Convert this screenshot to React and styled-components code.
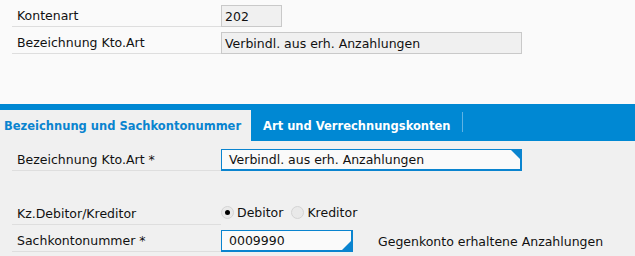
import React from 'react'
import styled, { createGlobalStyle } from 'styled-components'

const GlobalStyle = createGlobalStyle`
 html, body {
  margin: 0;
  padding: 0;
  background: #fafafa;
 }
 body {
  font-family: 'DejaVu Sans', Verdana, sans-serif;
  font-size: 12.5px;
  color: #111;
 }
`

const Page = styled.div`
 width: 635px;
 height: 256px;
 overflow: hidden;
 display: flex;
 flex-direction: column;
`

const Header = styled.section`
 height: 104px;
 padding: 5px 0 0 12px;
 box-sizing: border-box;
 display: flex;
 flex-direction: column;
 gap: 5px;
`

const Row = styled.div`
 display: grid;
 grid-template-columns: 209px auto;
 height: 22px;
 margin-top: ${(p) => p.$top || 0}px;
`

const Label = styled.div`
 border-bottom: 1px solid #dedede;
 padding-left: 5px;
 display: flex;
 align-items: center;
 white-space: nowrap;
`

const Field = styled.div`
 position: relative;
 width: ${(p) => p.$width}px;
 height: 22px;
 box-sizing: border-box;
 padding-left: ${(p) => (p.$edit ? 7 : 3)}px;
 display: flex;
 align-items: center;
 white-space: nowrap;
 background: ${(p) => (p.$edit ? '#fafafa' : '#f0f0f0')};
 border: 1px solid ${(p) => (p.$edit ? '#0a84cf' : '#c9c9c9')};
 ${(p) => (p.$edit ? 'border-width: 1px 2px 2px 1px;' : '')}
`

const Corner = styled.span`
 position: absolute;
 right: 0;
 ${(p) => (p.$bottom ? 'bottom: 0;' : 'top: 0;')}
 width: 0;
 height: 0;
 border-style: solid;
 border-width: ${(p) => (p.$bottom ? '0 0 9px 9px' : '0 9px 9px 0')};
 border-color: ${(p) =>
  p.$bottom
   ? 'transparent transparent #0a84cf transparent'
   : 'transparent #0a84cf transparent transparent'};
`

const TabBar = styled.nav`
 height: 37px;
 background: #0088d3;
 display: flex;
 align-items: flex-end;
`

const Tab = styled.div`
 height: 31px;
 box-sizing: border-box;
 padding: ${(p) => (p.$active ? '0 10px 0 4px' : '0 11px 0 12px')};
 display: flex;
 align-items: center;
 font-weight: bold;
 font-size: 11.5px;
 white-space: nowrap;
 background: ${(p) => (p.$active ? '#f0f0f0' : 'transparent')};
 color: ${(p) => (p.$active ? '#0a84cf' : '#fff')};
`

const TabDivider = styled.span`
 width: 1px;
 height: 20px;
 margin-bottom: 9px;
 background: #5fb3e4;
`

const Content = styled.section`
 flex: 1;
 background: #f0f0f0;
 padding: 8px 0 0 12px;
 display: flex;
 flex-direction: column;
`

const Radios = styled.div`
 display: flex;
 align-items: center;
 gap: 8px;
 padding-top: 1px;
 align-self: start;
 height: 16px;
`

const Radio = styled.label`
 display: flex;
 align-items: center;
 gap: 3px;
`

const Circle = styled.span`
 width: 13px;
 height: 13px;
 box-sizing: border-box;
 border-radius: 50%;
 border: 1px solid #d4d4d4;
 background: #e9e9e9;
 display: flex;
 align-items: center;
 justify-content: center;
 &::after {
  content: '';
  width: 5px;
  height: 5px;
  border-radius: 50%;
  background: ${(p) => (p.$checked ? '#000' : 'transparent')};
 }
`

const FieldLine = styled.div`
 display: flex;
 align-items: center;
 gap: 25px;
`

const Hint = styled.span`
 white-space: nowrap;
`

export default function App() {
 return (
  <Page>
   <GlobalStyle />
   <Header>
    <Row>
     <Label>Kontenart</Label>
     <Field $width={61}>202</Field>
    </Row>
    <Row>
     <Label>Bezeichnung Kto.Art</Label>
     <Field $width={301}>Verbindl. aus erh. Anzahlungen</Field>
    </Row>
   </Header>
   <TabBar>
    <Tab $active>Bezeichnung und Sachkontonummer</Tab>
    <Tab>Art und Verrechnungskonten</Tab>
    <TabDivider />
   </TabBar>
   <Content>
    <Row>
     <Label>Bezeichnung Kto.Art *</Label>
     <Field $width={301} $edit>
      Verbindl. aus erh. Anzahlungen
      <Corner />
     </Field>
    </Row>
    <Row $top={32}>
     <Label>Kz.Debitor/Kreditor</Label>
     <Radios>
      <Radio>
       <Circle $checked />
       Debitor
      </Radio>
      <Radio>
       <Circle />
       Kreditor
      </Radio>
     </Radios>
    </Row>
    <Row $top={5}>
     <Label>Sachkontonummer *</Label>
     <FieldLine>
      <Field $width={132} $edit>
       0009990
       <Corner $bottom />
      </Field>
      <Hint>Gegenkonto erhaltene Anzahlungen</Hint>
     </FieldLine>
    </Row>
   </Content>
  </Page>
 )
}
